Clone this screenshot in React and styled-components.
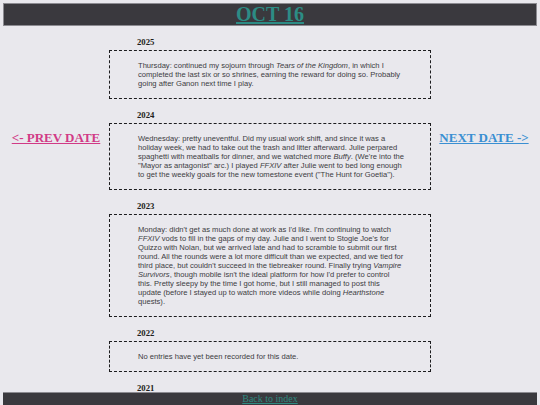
import React from 'react'
import styled, { createGlobalStyle } from 'styled-components'

const GlobalStyle = createGlobalStyle`
  html, body {
    margin: 0;
    background: #e9e8ed;
  }
  body {
    padding: 3px;
    font-family: "Liberation Serif", "Times New Roman", serif;
  }
`;

const entries = [
  {
    year: 2025,
    body: (
      <>
        Thursday: continued my sojourn through <i>Tears of the Kingdom</i>, in which I completed the last six or so
        shrines, earning the reward for doing so. Probably going after Ganon next time I play.
      </>
    ),
  },
  {
    year: 2024,
    body: (
      <>
        Wednesday: pretty uneventful. Did my usual work shift, and since it was a holiday week, we had to take out the
        trash and litter afterward. Julie perpared spaghetti with meatballs for dinner, and we watched more{' '}
        <i>Buffy</i>. (We're into the "Mayor as antagonist" arc.) I played <i>FFXIV</i> after Julie went to bed long
        enough to get the weekly goals for the new tomestone event ("The Hunt for Goetia").
      </>
    ),
  },
  {
    year: 2023,
    body: (
      <>
        Monday: didn't get as much done at work as I'd like. I'm continuing to watch <i>FFXIV</i> vods to fill in the
        gaps of my day. Julie and I went to Stogie Joe's for Quizzo with Nolan, but we arrived late and had to
        scramble to submit our first round. All the rounds were a lot more difficult than we expected, and we tied
        for third place, but couldn't succeed in the tiebreaker round. Finally trying <i>Vampire Survivors</i>,
        though mobile isn't the ideal platform for how I'd prefer to control this. Pretty sleepy by the time I got
        home, but I still managed to post this update (before I stayed up to watch more videos while doing{' '}
        <i>Hearthstone</i> quests).
      </>
    ),
  },
  { year: 2022, body: null },
  { year: 2021, body: null },
];

const Header = styled.header`
  background: #3a393e;
  border: 1px solid #8c8b91;
  text-align: center;
`;

const Title = styled.h1`
  margin: 0;
  font-size: 20px;
  line-height: 21px;
  font-weight: bold;
  a {
    color: #2c8c85;
  }
`;

const Layout = styled.div`
  display: grid;
  grid-template-columns: 1fr 322px 1fr;
  padding-bottom: 40px;
`;

const Side = styled.nav`
  padding-top: 102px;
  text-align: center;
`;

const DateLink = styled.a`
  font-size: 13px;
  line-height: 15px;
  font-weight: bold;
  color: ${p => p.$color};
  text-decoration: underline;
`;

const Entries = styled.main`
  display: flex;
  flex-direction: column;
`;

const Year = styled.h3`
  margin: 0;
  padding: 11px 0 3px 28px;
  font-size: 8.7px;
  line-height: 10px;
  font-weight: bold;
  color: #1e1e20;
`;

const EntryBox = styled.div`
  border: 1px dashed #1c1c1e;
  padding: 10px 25px 10px 28px;
  font-family: "Liberation Sans", Arial, sans-serif;
  font-size: 7.6px;
  line-height: 9px;
  color: #3c3c3f;
`;

const Footer = styled.footer`
  position: fixed;
  left: 3px;
  right: 3px;
  bottom: 0;
  background: #3a393e;
  border-top: 1px solid #8c8b91;
  text-align: center;
  font-size: 10px;
  line-height: 12px;
  a {
    color: #2e8a80;
  }
`;

const App = () => {
  return (
    <>
      <GlobalStyle />
      <Header>
        <Title>
          <a href="#">OCT 16</a>
        </Title>
      </Header>
      <Layout>
        <Side>
          <DateLink href="#" $color="#d13a86">&lt;- PREV DATE</DateLink>
        </Side>
        <Entries>
          {entries.map(e => (
            <section key={e.year}>
              <Year>{e.year}</Year>
              <EntryBox>{e.body || 'No entries have yet been recorded for this date.'}</EntryBox>
            </section>
          ))}
        </Entries>
        <Side>
          <DateLink href="#" $color="#3a8fd2">NEXT DATE -&gt;</DateLink>
        </Side>
      </Layout>
      <Footer>
        <a href="#">Back to index</a>
      </Footer>
    </>
  )
}

export default App;
